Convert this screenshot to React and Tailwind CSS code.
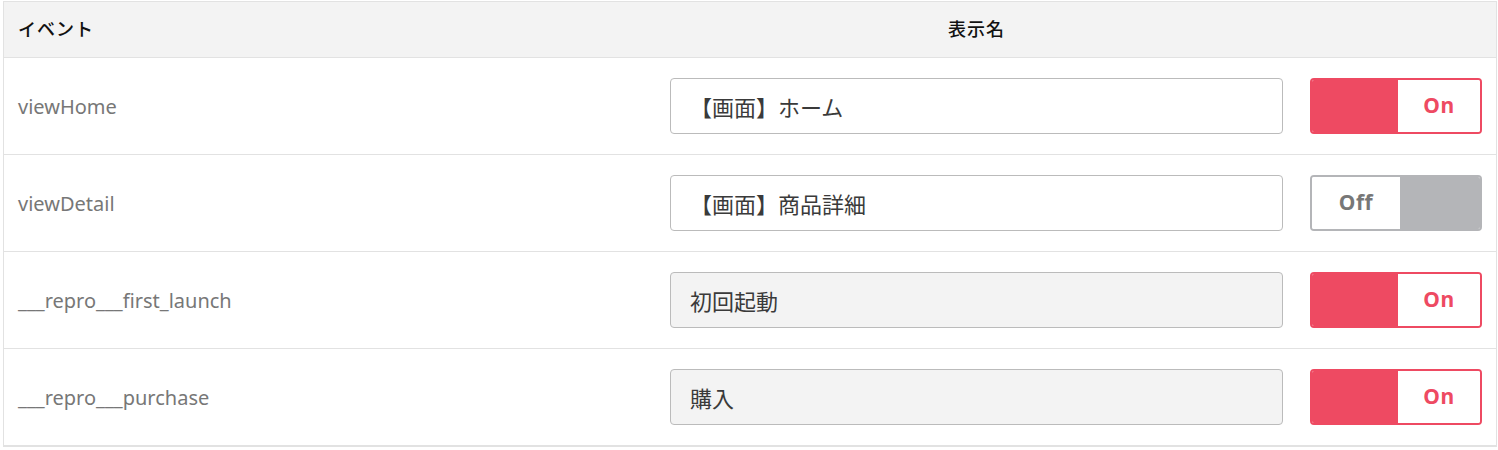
import React from 'react';

const rows = [
  { event: 'viewHome', label: '【画面】ホーム', editable: true, on: true },
  { event: 'viewDetail', label: '【画面】商品詳細', editable: true, on: false },
  { event: '___repro___first_launch', label: '初回起動', editable: false, on: true },
  { event: '___repro___purchase', label: '購入', editable: false, on: true },
];

const font = { fontFamily: '"Noto Sans", "Noto Sans CJK JP", sans-serif' };

function Toggle({ on }) {
  if (on) {
    return (
      <div className="ml-[27px] flex h-[56px] w-[172px] overflow-hidden rounded-[4px] border-2 border-[#ee4a62]">
        <div className="w-[86px] bg-[#ee4a62]" />
        <div className="flex flex-1 items-center justify-center bg-white text-[21px] font-bold tracking-[0.5px] text-[#ee4a62]">On</div>
      </div>
    );
  }
  return (
    <div className="ml-[27px] flex h-[56px] w-[172px] overflow-hidden rounded-[4px] border-2 border-[#b4b5b8]">
      <div className="flex w-[88px] items-center justify-center bg-white text-[21px] font-bold tracking-[0.5px] text-[#777]">Off</div>
      <div className="flex-1 bg-[#b4b5b8]" />
    </div>
  );
}

export default function App() {
  return (
    <div className="bg-white pl-[3px] pt-[1px]" style={font}>
      <div className="w-[1494px] border border-[#e2e2e2]">
        <div className="flex h-[56px] items-center border-b border-[#e2e2e2] bg-[#f3f3f3] text-[18px] font-medium text-[#111]">
          <div className="w-[646px] pl-[14px] tracking-[1px]">イベント</div>
          <div className="w-[653px] text-center tracking-[1px]">表示名</div>
        </div>
        {rows.map((r) => (
          <div key={r.event} className="flex h-[97px] items-center border-b border-[#e2e2e2]">
            <div className="w-[646px] pl-[14px] pt-[2px] text-[20px] text-[#777]">{r.event}</div>
            <input
              readOnly
              value={r.label}
              className={`ml-[20px] h-[56px] w-[613px] rounded-[4px] border border-[#bbb] px-[19px] text-[22px] text-[#3a3a3a] outline-none ${r.editable ? 'bg-white' : 'bg-[#f3f3f3]'}`}
              style={font}
            />
            <Toggle on={r.on} />
          </div>
        ))}
      </div>
    </div>
  );
}
